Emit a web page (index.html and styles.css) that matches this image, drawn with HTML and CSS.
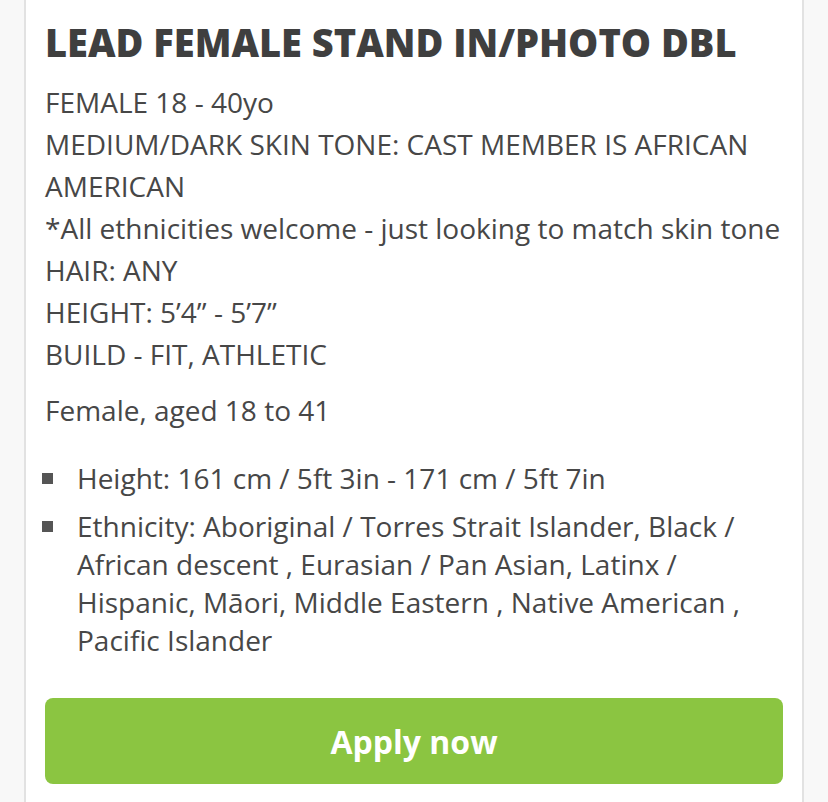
FILE: index.html
```html
<!DOCTYPE html>
<html>
<head>
<meta charset="utf-8">
<link rel="stylesheet" href="styles.css">
</head>
<body>
<div class="page">
  <div class="card">
    <h1 class="title">LEAD FEMALE STAND IN/PHOTO DBL</h1>
    <p class="desc">FEMALE 18 - 40yo<br>MEDIUM/DARK SKIN TONE: CAST MEMBER IS AFRICAN AMERICAN<br>*All ethnicities welcome - just looking to match skin tone<br>HAIR: ANY<br>HEIGHT: 5’4” - 5’7”<br>BUILD - FIT, ATHLETIC</p>
    <p class="summary">Female, aged 18 to 41</p>
    <ul class="reqs">
      <li>Height: 161 cm / 5ft 3in - 171 cm / 5ft 7in</li>
      <li>Ethnicity: Aboriginal / Torres Strait Islander, Black / African descent , Eurasian / Pan Asian, Latinx / Hispanic, Māori, Middle Eastern , Native American , Pacific Islander</li>
    </ul>
    <button class="apply">Apply now</button>
  </div>
</div>
</body>
</html>
```

FILE: styles.css
```css
html, body {
  margin: 0;
  padding: 0;
  background: #f8f8f8;
  height: 100%;
  overflow: hidden;
}
.page {
  padding: 0 24px;
}
.card {
  background: #ffffff;
  border-left: 2px solid #e2e2e2;
  border-right: 2px solid #e2e2e2;
  padding: 18px 19px 40px;
  font-family: "Open Sans", sans-serif;
  color: #474747;
  min-height: 900px;
}
.title {
  margin: 0;
  font-size: 38px;
  line-height: 48px;
  font-weight: 800;
  color: #3f3f3f;
  white-space: nowrap;
}
.desc {
  margin: 15px 0 0;
  font-size: 28px;
  line-height: 42px;
}
.summary {
  margin: 14px 0 0;
  font-size: 28px;
  line-height: 42px;
}
.reqs {
  margin: 28px 0 0;
  padding: 0 0 0 32px;
  list-style: none;
}
.reqs li {
  position: relative;
  font-size: 28px;
  line-height: 38px;
  margin-bottom: 10px;
}
.reqs li::before {
  content: "";
  position: absolute;
  left: -35px;
  top: 14px;
  width: 11px;
  height: 11px;
  background: #555555;
}
.apply {
  display: block;
  width: 100%;
  margin-top: 39px;
  height: 86px;
  border: 0;
  border-radius: 8px;
  background: #8bc541;
  color: #ffffff;
  font-family: "Open Sans", sans-serif;
  font-weight: 700;
  font-size: 32px;
}
```
